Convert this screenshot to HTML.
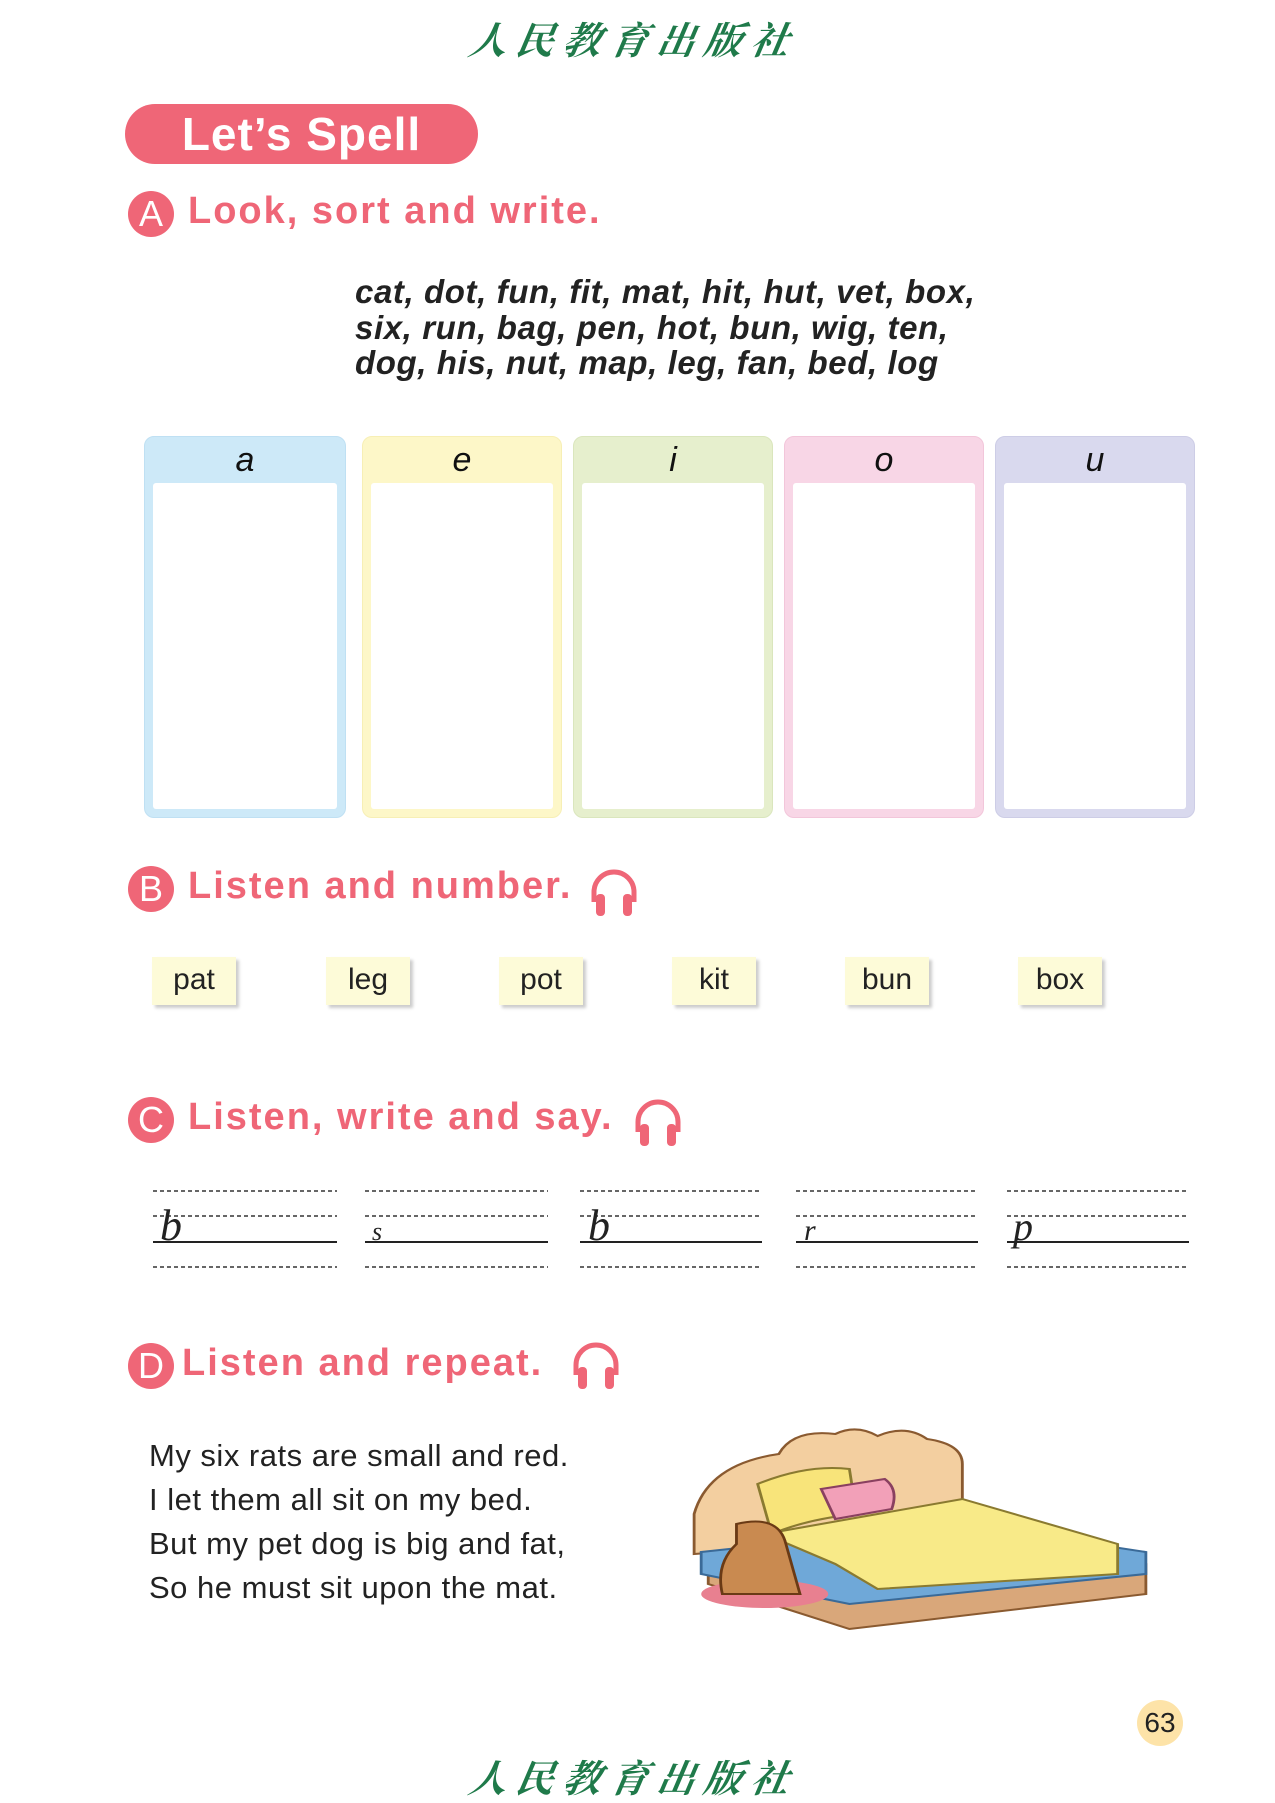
<!DOCTYPE html>
<html><head><meta charset="utf-8"><style>
body{margin:0;width:1275px;height:1800px;background:#fff;position:relative;overflow:hidden;font-family:"Liberation Sans",sans-serif}
.abs{position:absolute}
.logo{font-family:"Noto Serif CJK SC","WenQuanYi Zen Hei",serif;color:#1f7a4a;font-size:38px;letter-spacing:9px;font-style:italic;font-weight:bold;transform:skewX(-10deg)}
.pill{left:125px;top:104px;width:353px;height:60px;border-radius:30px;background:#ef6677;color:#fff;font-weight:bold;font-size:46px;line-height:60px;text-align:center;letter-spacing:1px}
.circ{width:46px;height:46px;border-radius:50%;background:#ef6677;color:#fff;font-size:36px;line-height:46px;text-align:center}
.title{color:#ef6677;font-weight:bold;font-size:38px;letter-spacing:2px}
.words{left:355px;top:274px;font-size:33px;font-weight:bold;font-style:italic;line-height:35.5px;color:#222;letter-spacing:0.6px}
.box{top:436px;height:380px;border-radius:10px;border:1px solid}
.box .h{height:46px;font-size:34px;font-style:italic;text-align:center;line-height:46px;color:#111}
.box .in{position:absolute;left:8px;right:8px;top:46px;bottom:8px;background:#fff;border-radius:3px}
.card{top:957px;width:84px;height:48px;background:#fdfbd8;box-shadow:3px 3px 3px #ccc;font-size:30px;text-align:center;line-height:46px;color:#222}
.poem{left:149px;top:1434px;font-size:31px;line-height:44px;color:#222;letter-spacing:0.5px}
</style></head><body>
<div class="abs logo" style="left:470px;top:10px">人民教育出版社</div>
<div class="abs pill">Let’s Spell</div>

<div class="abs circ" style="left:128px;top:191px">A</div>
<div class="abs title" style="left:188px;top:190px">Look, sort and write.</div>
<div class="abs words">cat, dot, fun, fit, mat, hit, hut, vet, box,<br>six, run, bag, pen, hot, bun, wig, ten,<br>dog, his, nut, map, leg, fan, bed, log</div>

<div class="abs box" style="left:144px;width:200px;background:#cde9f8;border-color:#bfe0f3"><div class="h">a</div><div class="in"></div></div>
<div class="abs box" style="left:362px;width:198px;background:#fdf7c8;border-color:#f7efb5"><div class="h">e</div><div class="in"></div></div>
<div class="abs box" style="left:573px;width:198px;background:#e6efcd;border-color:#dae6bd"><div class="h">i</div><div class="in"></div></div>
<div class="abs box" style="left:784px;width:198px;background:#f8d6e6;border-color:#f2c6da"><div class="h">o</div><div class="in"></div></div>
<div class="abs box" style="left:995px;width:198px;background:#d9d9ee;border-color:#cdcde6"><div class="h">u</div><div class="in"></div></div>

<div class="abs circ" style="left:128px;top:866px">B</div>
<div class="abs title" style="left:188px;top:865px">Listen and number.</div>
<svg class="abs" style="left:586px;top:864px" width="56" height="54" viewBox="0 0 56 54"><path d="M8 38 V28 A20 20 0 0 1 48 28 V38" fill="none" stroke="#ef6677" stroke-width="5"/><rect x="10" y="30" width="9" height="22" rx="4" fill="#ef6677"/><rect x="37" y="30" width="9" height="22" rx="4" fill="#ef6677"/></svg>

<div class="abs card" style="left:152px">pat</div>
<div class="abs card" style="left:326px">leg</div>
<div class="abs card" style="left:499px">pot</div>
<div class="abs card" style="left:672px">kit</div>
<div class="abs card" style="left:845px">bun</div>
<div class="abs card" style="left:1018px">box</div>

<div class="abs circ" style="left:128px;top:1097px">C</div>
<div class="abs title" style="left:188px;top:1096px">Listen, write and say.</div>
<svg class="abs" style="left:630px;top:1094px" width="56" height="54" viewBox="0 0 56 54"><path d="M8 38 V28 A20 20 0 0 1 48 28 V38" fill="none" stroke="#ef6677" stroke-width="5"/><rect x="10" y="30" width="9" height="22" rx="4" fill="#ef6677"/><rect x="37" y="30" width="9" height="22" rx="4" fill="#ef6677"/></svg>

<svg class="abs" style="left:0;top:1180px" width="1275" height="100">
<g stroke="#333" stroke-width="1.5" stroke-dasharray="4,3">
<path d="M153 11H337M365 11H548M580 11H762M796 11H978M1007 11H1189"/>
<path d="M153 36H337M365 36H548M580 36H762M796 36H978M1007 36H1189"/>
<path d="M153 87H337M365 87H548M580 87H762M796 87H978M1007 87H1189"/>
</g>
<path d="M153 62H337M365 62H548M580 62H762M796 62H978M1007 62H1189" stroke="#222" stroke-width="2"/>
<g font-family="Liberation Serif" font-style="italic" font-size="44" fill="#222">
<text x="160" y="60">b</text><text x="372" y="60" font-size="26">s</text><text x="588" y="60">b</text><text x="804" y="60" font-size="30">r</text><text x="1013" y="60" font-size="40">p</text>
</g></svg>

<div class="abs circ" style="left:128px;top:1343px">D</div>
<div class="abs title" style="left:182px;top:1342px">Listen and repeat.</div>
<svg class="abs" style="left:568px;top:1337px" width="56" height="54" viewBox="0 0 56 54"><path d="M8 38 V28 A20 20 0 0 1 48 28 V38" fill="none" stroke="#ef6677" stroke-width="5"/><rect x="10" y="30" width="9" height="22" rx="4" fill="#ef6677"/><rect x="37" y="30" width="9" height="22" rx="4" fill="#ef6677"/></svg>

<div class="abs poem">My six rats are small and red.<br>I let them all sit on my bed.<br>But my pet dog is big and fat,<br>So he must sit upon the mat.</div>

<svg class="abs" style="left:680px;top:1424px" width="480" height="215" viewBox="0 0 340 215" preserveAspectRatio="none">
<path d="M10 90 Q20 40 70 30 Q80 5 110 10 Q125 0 140 12 Q160 0 175 15 Q200 20 200 40 L200 110 L10 130Z" fill="#f3cfa0" stroke="#8a5a30" stroke-width="2"/>
<path d="M20 140 L210 110 L330 140 L330 170 L120 205 L20 160Z" fill="#d9a77a" stroke="#8a5a30" stroke-width="2"/>
<path d="M15 128 L200 100 L330 128 L330 150 L120 180 L15 150Z" fill="#6fa8d8" stroke="#3a6a98" stroke-width="2"/>
<path d="M60 110 L200 75 L310 120 L310 150 L140 165 L110 140Z" fill="#f8ea88" stroke="#8a7a30" stroke-width="2"/>
<path d="M55 60 Q90 40 120 45 L125 90 Q90 95 65 110Z" fill="#f8e47a" stroke="#8a7a30" stroke-width="2"/>
<path d="M100 65 L145 55 Q155 65 150 85 L110 95Z" fill="#f2a0b8" stroke="#8a4060" stroke-width="2"/>
<ellipse cx="60" cy="170" rx="45" ry="14" fill="#e88090"/>
<path d="M40 100 Q70 90 75 120 L85 170 L30 170 Q25 140 40 120Z" fill="#c98a50" stroke="#6a3a15" stroke-width="2"/>
</svg>

<div class="abs" style="left:1137px;top:1700px;width:46px;height:46px;border-radius:50%;background:#fde3a8;text-align:center;line-height:46px;font-size:28px;color:#222">63</div>
<div class="abs logo" style="left:470px;top:1748px">人民教育出版社</div>
</body></html>
